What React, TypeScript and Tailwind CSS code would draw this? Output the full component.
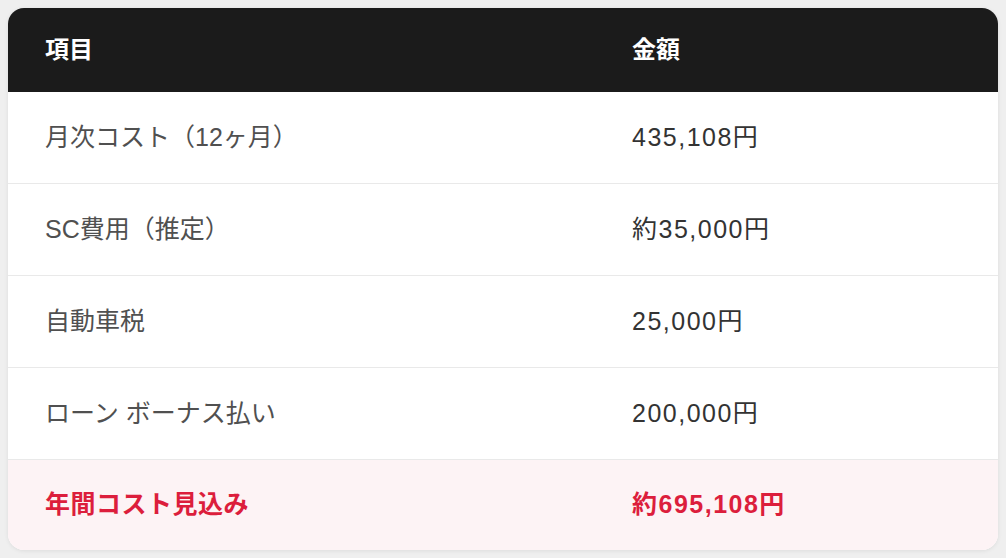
import React from "react";

const rows = [
  { label: "月次コスト（12ヶ月）", value: "435,108円" },
  { label: "SC費用（推定）", value: "約35,000円" },
  { label: "自動車税", value: "25,000円" },
  { label: "ローン ボーナス払い", value: "200,000円" },
];

export default function App() {
  return (
    <div
      className="w-[1006px] h-[558px] bg-[#efefef] p-[8px]"
      style={{ fontFamily: '"Liberation Sans", "Noto Sans CJK JP", sans-serif' }}
    >
      <div className="w-[990px] h-[542px] rounded-[16px] overflow-hidden bg-white shadow-[0_1px_4px_rgba(0,0,0,0.08)] flex flex-col">
        <div className="h-[84px] bg-[#1b1b1b] flex items-center text-white font-bold text-[24px]">
          <div className="w-[588px] pl-[37px]">項目</div>
          <div className="flex-1 pl-[36px]">金額</div>
        </div>
        {rows.map((r) => (
          <div
            key={r.label}
            className="h-[92px] border-b border-[#e9e9e9] flex items-center text-[25px]"
          >
            <div className="w-[588px] pl-[37px] text-[#505050]">{r.label}</div>
            <div className="flex-1 pl-[36px] text-[#333333] tracking-[1.5px]">{r.value}</div>
          </div>
        ))}
        <div className="flex-1 bg-[#fdf3f5] flex items-center text-[25px] font-bold text-[#dc1e3c]">
          <div className="w-[588px] pl-[37px] tracking-[0.5px]">年間コスト見込み</div>
          <div className="flex-1 pl-[36px] tracking-[1.5px]">約695,108円</div>
        </div>
      </div>
    </div>
  );
}
